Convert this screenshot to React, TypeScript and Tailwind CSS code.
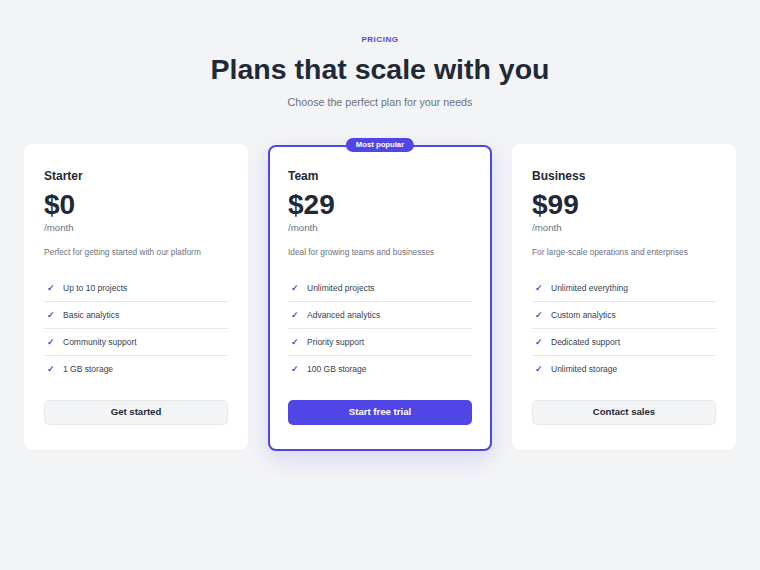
import React from "react";

type Plan = {
  name: string;
  price: string;
  desc: string;
  features: string[];
  cta: string;
  popular?: boolean;
};

const plans: Plan[] = [
  {
    name: "Starter",
    price: "$0",
    desc: "Perfect for getting started with our platform",
    features: ["Up to 10 projects", "Basic analytics", "Community support", "1 GB storage"],
    cta: "Get started",
  },
  {
    name: "Team",
    price: "$29",
    desc: "Ideal for growing teams and businesses",
    features: ["Unlimited projects", "Advanced analytics", "Priority support", "100 GB storage"],
    cta: "Start free trial",
    popular: true,
  },
  {
    name: "Business",
    price: "$99",
    desc: "For large-scale operations and enterprises",
    features: ["Unlimited everything", "Custom analytics", "Dedicated support", "Unlimited storage"],
    cta: "Contact sales",
  },
];

function Card({ p }: { p: Plan }) {
  return (
    <div
      className={
        p.popular
          ? "relative flex translate-y-[1px] flex-col rounded-[8px] bg-white border-2 border-[#4f46e5] px-[18px] pt-[21px] pb-[23px] shadow-[0_8px_22px_rgba(79,70,229,0.16)]"
          : "relative flex flex-col rounded-[8px] bg-white px-[20px] pt-[24px] pb-[25px] shadow-[0_1px_2px_rgba(0,0,0,0.03)]"
      }
    >
      {p.popular && (
        <div className="absolute left-1/2 top-[-9px] -translate-x-1/2 rounded-full bg-[#4f46e5] px-[10px] text-[7.7px] font-bold leading-[14px] text-white">
          Most popular
        </div>
      )}
      <div className="text-[12px] font-bold leading-[16px] text-[#1f2937]">{p.name}</div>
      <div className="mt-[5px] text-[28px] font-bold leading-[32px] text-[#1f2937]">{p.price}</div>
      <div className="mt-[1px] text-[9.7px] leading-[12px] text-[#6b7280]">/month</div>
      <div className="mt-[12px] text-[8.3px] leading-[12px] text-[#6b7280]">{p.desc}</div>
      <ul className="mt-[17px] flex flex-col">
        {p.features.map((f, i) => (
          <li
            key={f}
            className={
              "flex items-center py-[7px] text-[8.5px] leading-[12px] text-[#374151] " +
              (i < p.features.length - 1 ? "border-b border-[#e5e7eb]" : "")
            }
          >
            <span className="ml-[3px] w-[16px] text-[8.5px] font-bold text-[#4f46e5]">✓</span>
            <span>{f}</span>
          </li>
        ))}
      </ul>
      <button
        className={
          p.popular
            ? "mt-[18px] h-[25px] w-full rounded-[5px] bg-[#4f46e5] text-[9.6px] font-bold text-white"
            : "mt-[18px] h-[25px] w-full rounded-[5px] border border-[#e5e7eb] bg-[#f3f4f6] text-[9.6px] font-bold text-[#1f2937]"
        }
      >
        {p.cta}
      </button>
    </div>
  );
}

export default function App() {
  return (
    <div
      className="min-h-[570px] w-full bg-[#f3f4f6] px-[24px] pt-[34px]"
      style={{ fontFamily: '"Liberation Sans", Arial, sans-serif' }}
    >
      <div className="text-center text-[8.1px] font-bold leading-[12px] tracking-[0.5px] text-[#4f46e5]">PRICING</div>
      <h1 className="mt-[6px] text-center text-[28.5px] font-bold leading-[34px] text-[#1f2937]">
        Plans that scale with you
      </h1>
      <p className="mt-[9px] text-center text-[10.7px] leading-[14px] text-[#6b7280]">
        Choose the perfect plan for your needs
      </p>
      <div className="mt-[35px] grid grid-cols-3 gap-[20px]">
        {plans.map((p) => (
          <Card key={p.name} p={p} />
        ))}
      </div>
    </div>
  );
}
